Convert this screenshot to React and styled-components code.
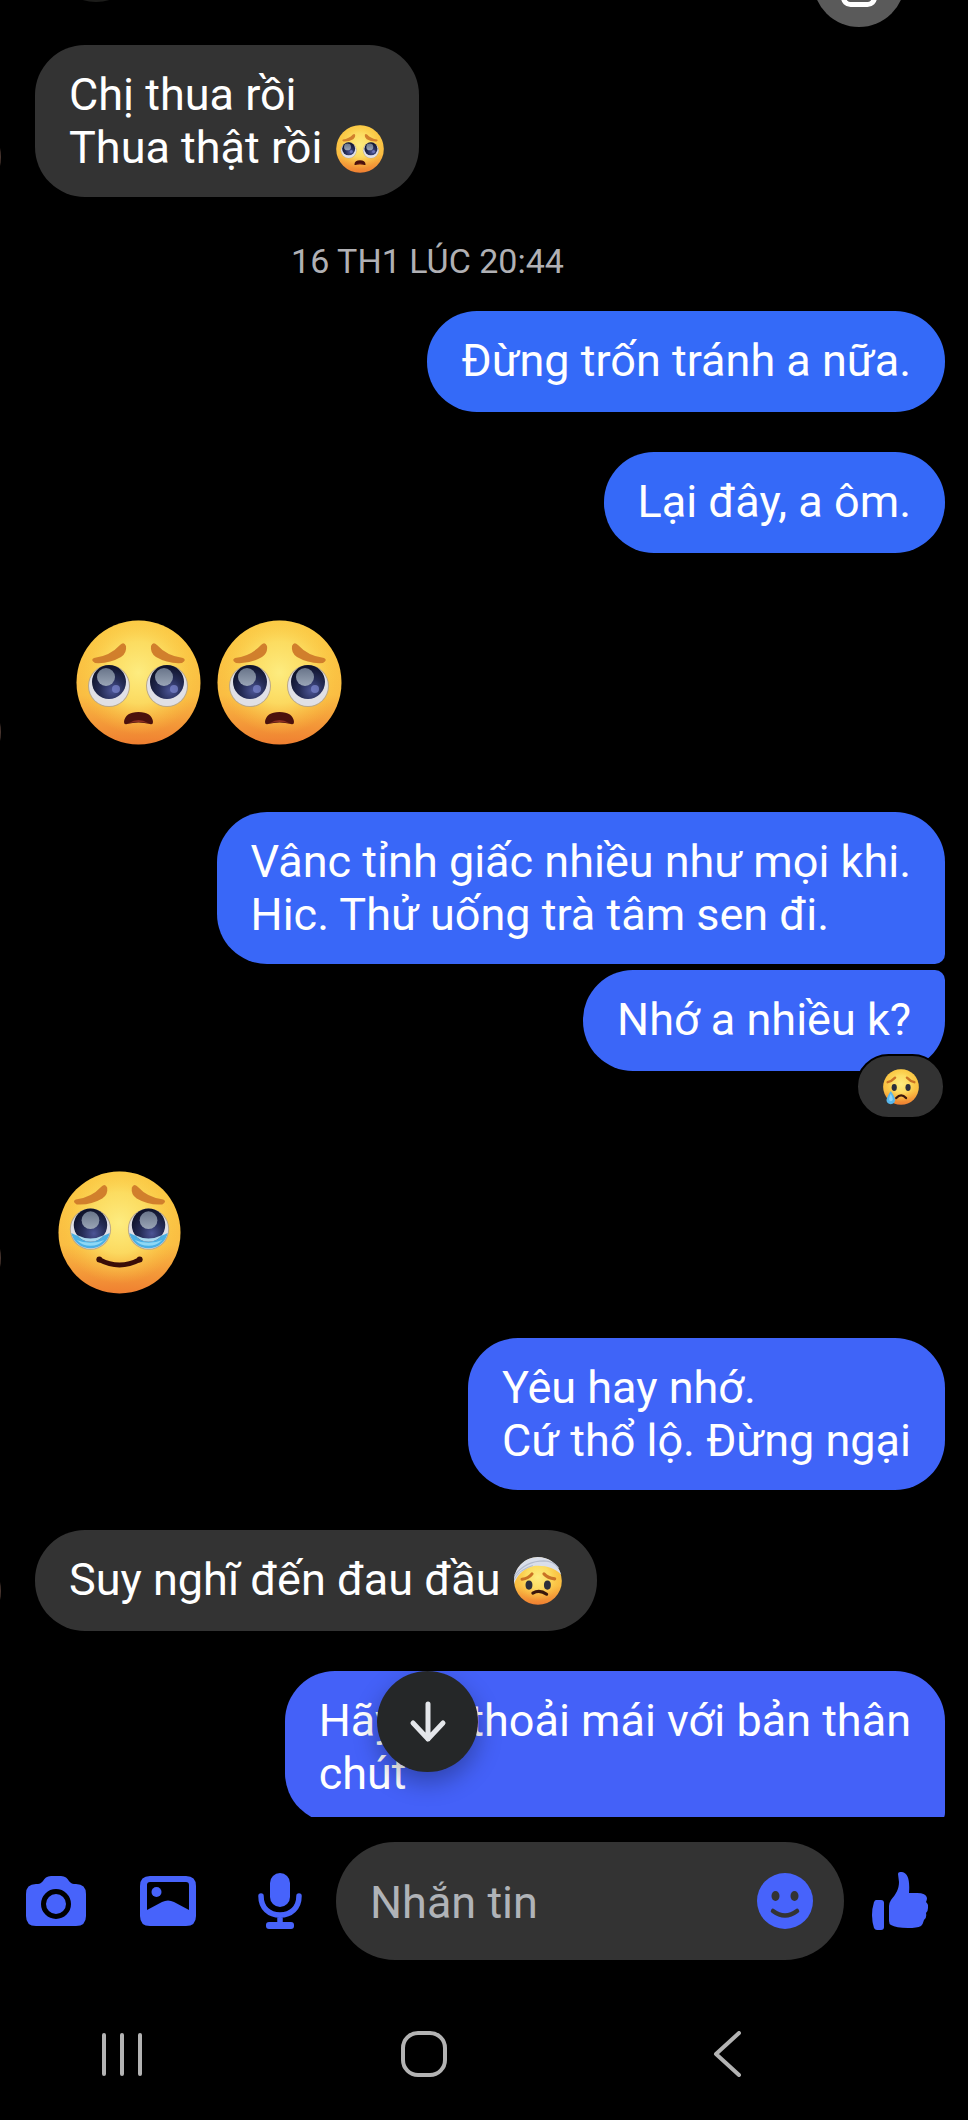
import React, { useId } from 'react'
import styled, { createGlobalStyle } from 'styled-components'

const accent = '#4763fb'

// the message list, oldest first
const messages = [
  { id: 1, from: 'them', lines: ['Chị thua rồi', 'Thua thật rồi'], emoji: 'pleading' },
  { id: 2, time: '16 TH1 LÚC 20:44' },
  { id: 3, from: 'me', tone: '#346af8', lines: ['Đừng trốn tránh a nữa.'] },
  { id: 4, from: 'me', tone: '#3569f8', lines: ['Lại đây, a ôm.'] },
  { id: 5, from: 'them', stickers: ['pleading', 'pleading'] },
  { id: 6, from: 'me', tone: '#3967f8', lines: ['Vânc tỉnh giấc nhiều như mọi khi.', 'Hic. Thử uống trà tâm sen đi.'], joinBottom: true },
  { id: 7, from: 'me', tone: '#3b66f8', lines: ['Nhớ a nhiều k?'], joinTop: true, reaction: 'crying' },
  { id: 8, from: 'them', stickers: ['touched'], large: true },
  { id: 9, from: 'me', tone: '#3f64f8', lines: ['Yêu hay nhớ.', 'Cứ thổ lộ. Đừng ngại'] },
  { id: 10, from: 'them', lines: ['Suy nghĩ đến đau đầu'], emoji: 'bandaged' },
  { id: 11, from: 'me', tone: '#4461f8', lines: ['Hãy để thoải mái với bản thân', 'chút'], joinBottom: true },
]

const Brows = ({ y = 0 }) => {
  const d = 'M18 38Q34 36 44 25Q48 21 50 26Q51 33 45 37Q33 44 19 43Q14 40 18 38Z'
  return (
    <g fill="#d17f2c" transform={`translate(0 ${y})`}>
      <path d={d} />
      <path d={d} transform="translate(125 0) scale(-1 1)" />
    </g>
  )
}

const BigEye = ({ x, y, eye, shine, tear }) => (
  <g transform={`translate(${x} ${y})`}>
    <circle r="21" fill="#b9a88a" />
    <circle r="20" fill="#e0e0e6" />
    {tear && <path d="M-19.500 4Q-10 9 0 9Q10 9 19.500 4A20 20 0 0 1 -19.500 4Z" fill="#4bb0e4" />}
    {tear && <path d="M-14 11Q0 17 14 11Q8 17 0 17Q-8 17 -14 11Z" fill="#8fd8f5" />}
    <circle cy={tear ? -4 : -4} r="17" fill={`url(#${eye})`} />
    {tear && <path d="M-14 6Q0 13 14 6Q8 13 0 13Q-8 13 -14 6Z" fill="#a9d9ee" />}
    <circle cx={tear ? 0 : -3} cy="-9" r="9" fill={`url(#${shine})`} />
    {!tear && <circle cx="7" cy="3" r="4" fill="#7d88d0" opacity="0.7" />}
  </g>
)

const Emoji = ({ kind, label }) => {
  const id = useId().replace(/[^a-zA-Z0-9]/g, '')
  const face = `face${id}`
  const glow = `glow${id}`
  const eye = `eye${id}`
  const shine = `shine${id}`

  return (
    <svg viewBox="0 0 125 125" role="img" aria-label={label || kind}>
      <defs>
        <linearGradient id={face} x1="0" y1="0" x2="0" y2="1">
          <stop offset="0" stopColor="#fbc843" />
          <stop offset="0.6" stopColor="#fabd43" />
          <stop offset="1" stopColor="#ef7f31" />
        </linearGradient>
        <radialGradient id={glow} cx="0.5" cy="0.42" r="0.5">
          <stop offset="0" stopColor="#fdec80" />
          <stop offset="0.5" stopColor="#fce268" stopOpacity="0.8" />
          <stop offset="1" stopColor="#fbc93f" stopOpacity="0" />
        </radialGradient>
        <radialGradient id={eye} cx="0.6" cy="0.75" r="0.7">
          <stop offset="0" stopColor="#4c5596" />
          <stop offset="0.5" stopColor="#252c56" />
          <stop offset="1" stopColor="#10142c" />
        </radialGradient>
        <linearGradient id={shine} x1="0" y1="0" x2="0" y2="1">
          <stop offset="0" stopColor="#69758a" />
          <stop offset="1" stopColor="#9aa5b6" />
        </linearGradient>
      </defs>
      <circle cx="62.500" cy="62.500" r="62" fill={`url(#${face})`} />
      <circle cx="62.500" cy="62.500" r="62" fill={`url(#${glow})`} />

      {kind === 'pleading' && (
        <>
          <Brows />
          <BigEye x={33} y={66} eye={eye} shine={shine} />
          <BigEye x={91} y={66} eye={eye} shine={shine} />
          <path d="M48 102Q49 92 62.500 92Q76 92 77 102Q77 105 74 104Q62.500 101 51 104Q48 105 48 102Z" fill="#4b110d" />
          <path d="M53 103Q62.500 97 72 103Q62.500 101 53 103Z" fill="#8c2f22" />
        </>
      )}

      {kind === 'touched' && (
        <>
          <Brows y={-9} />
          <BigEye x={33} y={59} eye={eye} shine={shine} tear />
          <BigEye x={92} y={59} eye={eye} shine={shine} tear />
          <path d="M42 90Q62.500 101 83 90" fill="none" stroke="#3a0d08" strokeWidth="5" strokeLinecap="round" />
          <circle cx="42" cy="90" r="3" fill="#3a0d08" />
          <circle cx="83" cy="90" r="3" fill="#3a0d08" />
        </>
      )}

      {kind === 'bandaged' && (
        <>
          <path d="M0 72C4 52 24 30 49 24C77 20 106 28 123 46C114 16 90 0 62 0C27 0 0 30 0 62Z" fill="#d9deea" />
          <path d="M2 47C22 22 49 10 78 10Q103 11 116 28M0 60Q12 33 49 22" fill="none" stroke="#b4bccd" strokeWidth="3" />
          <g fill="none" stroke="#c97225" strokeWidth="8" strokeLinecap="round">
            <path d="M21 58Q38 56 47 44" />
            <path d="M78 44Q88 55 106 57" />
          </g>
          <ellipse cx="39" cy="73" rx="9" ry="12" fill="#2b2f3c" />
          <ellipse cx="87" cy="73" rx="9" ry="12" fill="#2b2f3c" />
          <path d="M49 94Q67 84 85 97" fill="none" stroke="#3a170c" strokeWidth="8" strokeLinecap="round" />
        </>
      )}

      {kind === 'crying' && (
        <>
          <g fill="none" stroke="#c97225" strokeWidth="8" strokeLinecap="round">
            <path d="M16 46Q30 43 42 30" />
            <path d="M83 30Q95 43 109 46" />
          </g>
          <ellipse cx="39" cy="64" rx="9" ry="12" fill="#2b2f3c" />
          <ellipse cx="87" cy="64" rx="9" ry="12" fill="#2b2f3c" />
          <path d="M46 101Q63 82 80 101" fill="none" stroke="#3a170c" strokeWidth="8" strokeLinecap="round" />
          <path d="M27 76Q42 97 42 108Q41 122 27 122Q13 122 12 108Q13 97 27 76Z" fill="#58b7ec" />
          <path d="M27 86Q34 98 34 106Q33 112 27 112Q21 110 21 104Q22 96 27 86Z" fill="#8ed4f8" />
        </>
      )}
    </svg>
  )
}

const Message = ({ message }) => {
  const { from, lines, emoji, stickers, large, reaction, time } = message

  if (time) return <Time>{time}</Time>

  return (
    <Row $from={from} $joined={message.joinTop} $reacted={!!reaction}>
      {from === 'them' && <Avatar />}
      {stickers && (
        <Stickers $large={large}>
          {stickers.map((kind, index) => <Emoji key={index} kind={kind} />)}
        </Stickers>
      )}
      {lines && (
        <Bubble $tone={message.tone} $joinTop={message.joinTop} $joinBottom={message.joinBottom}>
          {lines.map((line, index) => (
            <Line key={line}>
              {line}
              {emoji && index === lines.length - 1 && <> <Emoji kind={emoji} /></>}
            </Line>
          ))}
          {reaction && <Reaction aria-label="Cảm xúc"><Emoji kind={reaction} /></Reaction>}
        </Bubble>
      )}
    </Row>
  )
}

const App = () => {
  return (
    <Screen>
      <GlobalStyle />
      <Header>
        <HeaderAvatar />
        <HeaderButton aria-label="Mở">
          <svg width="36" height="36" viewBox="0 0 36 36" fill="none" stroke="#fff" strokeWidth="5">
            <rect x="2.500" y="2.500" width="31" height="31" rx="7" />
          </svg>
        </HeaderButton>
      </Header>

      <Thread>
        <List>
          {messages.map((message) => <Message key={message.id} message={message} />)}
        </List>
        <ScrollDown aria-label="Xuống cuối">
          <svg width="40" height="42" viewBox="0 0 40 42" fill="none" stroke="#e4e6ea" strokeWidth="5" strokeLinecap="round" strokeLinejoin="round">
            <path d="M20 3V38M5 22L20 38L35 22" />
          </svg>
        </ScrollDown>
      </Thread>

      <Composer>
        <IconButton aria-label="Máy ảnh">
          <svg width="60" height="50" viewBox="0 0 60 50">
            <path fill={accent} d="M10 8H12C16 8 17 4 20 1.500Q22 0 25 0H35Q38 0 40 1.500C43 4 44 8 48 8H50Q60 8 60 18V40Q60 50 50 50H10Q0 50 0 40V18Q0 8 10 8Z" />
            <circle cx="30" cy="28" r="12.500" fill={accent} stroke="#000" strokeWidth="5" />
          </svg>
        </IconButton>
        <IconButton aria-label="Ảnh">
          <svg width="56" height="50" viewBox="0 0 56 50">
            <path fill={accent} fillRule="evenodd" d="M10 0H46Q56 0 56 10V40Q56 50 46 50H10Q0 50 0 40V10Q0 0 10 0ZM10 6Q7 6 7 9V34L22 26Q28 23 34 26L49 34V9Q49 6 46 6Z" />
            <circle cx="16.500" cy="16" r="5" fill={accent} />
          </svg>
        </IconButton>
        <IconButton aria-label="Ghi âm">
          <svg width="44" height="56" viewBox="0 0 44 56">
            <rect x="12" y="0" width="20" height="34" rx="10" fill={accent} />
            <path d="M3 23C3 35 11 42 22 42C33 42 41 35 41 23M22 42V52" fill="none" stroke={accent} strokeWidth="5.500" strokeLinecap="round" />
            <rect x="8" y="49" width="28" height="7" rx="3" fill={accent} />
          </svg>
        </IconButton>
        <Field>
          <Input type="text" placeholder="Nhắn tin" aria-label="Nhắn tin" />
          <EmojiButton aria-label="Biểu tượng cảm xúc">
            <svg width="56" height="56" viewBox="0 0 56 56">
              <circle cx="28" cy="28" r="28" fill={accent} />
              <ellipse cx="18.500" cy="23" rx="4" ry="5" fill="#333" />
              <ellipse cx="37.500" cy="23" rx="4" ry="5" fill="#333" />
              <path d="M16 38Q28 47 40 38" fill="none" stroke="#333" strokeWidth="4.500" strokeLinecap="round" />
            </svg>
          </EmojiButton>
        </Field>
        <IconButton aria-label="Thích">
          <svg width="56" height="58" viewBox="0 0 56 58" fill={accent}>
            <path d="M4 28H9Q12 28 12 31V55Q12 58 9 58H5Q3 58 2 56Q-2 43 2 30Q3 28 4 28Z" />
            <path d="M26 2C26 0 28 0 30 0C36 1 38 8 37 21H45Q54 21 55 26Q55 28 54 30Q57 33 56 36Q56 39 54 41Q55 46 52 48Q51 52 49 54Q45 56 36 56Q24 56 19 53Q17 52 17 49V34Q17 31 19 28C24 22 27 17 27 10Z" />
          </svg>
        </IconButton>
      </Composer>

      <Navigation>
        <NavButton aria-label="Gần đây">
          <svg width="42" height="46" viewBox="0 0 42 46" stroke="#b3b3b3" strokeWidth="4" strokeLinecap="round">
            <path d="M3 4V43M21 4V43M39 4V43" />
          </svg>
        </NavButton>
        <NavButton aria-label="Trang chủ">
          <svg width="46" height="46" viewBox="0 0 46 46" fill="none" stroke="#b3b3b3" strokeWidth="4">
            <rect x="2" y="2" width="42" height="42" rx="15" />
          </svg>
        </NavButton>
        <NavButton aria-label="Quay lại">
          <svg width="28" height="46" viewBox="0 0 28 46" fill="none" stroke="#b3b3b3" strokeWidth="4" strokeLinecap="round" strokeLinejoin="round">
            <path d="M26 2L3 23L26 44" />
          </svg>
        </NavButton>
      </Navigation>
    </Screen>
  )
}

const GlobalStyle = createGlobalStyle`
  * {
    box-sizing: border-box;
  }
  body {
    margin: 0;
    background-color: black;
    font-family: Roboto, "Liberation Sans", sans-serif;
  }
  button {
    border: none;
    padding: 0;
    background-color: transparent;
    display: flex;
    align-items: center;
    justify-content: center;
    cursor: pointer;
  }
  svg {
    display: block;
  }
`

const Screen = styled.div`
  height: 100vh;
  display: flex;
  flex-direction: column;
  overflow: hidden;
  background-color: black;
  color: white;
`

const Header = styled.header`
  display: flex;
  justify-content: space-between;
  align-items: flex-end;
  height: 27px;
  flex-shrink: 0;
  padding: 0 63px 0 50px;
  overflow: hidden;
`

const HeaderAvatar = styled.div`
  width: 92px;
  height: 92px;
  margin-bottom: 25px;
  border-radius: 50%;
  background-color: #1c1c1a;
`

const HeaderButton = styled.button`
  width: 92px;
  height: 92px;
  flex-shrink: 0;
  border-radius: 50%;
  background-color: #5a5a5a;

  svg {
    margin-top: 16px;
  }
`

const Thread = styled.main`
  flex: 1;
  min-height: 0;
  position: relative;
  overflow: hidden;
`

const List = styled.div`
  padding: 18px 23px 0 0;
`

const Row = styled.div`
  display: flex;
  align-items: flex-end;
  justify-content: ${({ $from }) => ($from === 'me' ? 'flex-end' : 'flex-start')};
  margin-top: ${({ $joined }) => ($joined ? '6px' : '40px')};
  padding-bottom: ${({ $reacted }) => ($reacted ? '46px' : '0')};

  &:first-child {
    margin-top: 0;
  }
`

/* sits almost fully past the left edge */
const Avatar = styled.div`
  width: 80px;
  height: 80px;
  flex-shrink: 0;
  margin: 0 34px 0 -79px;
  border-radius: 50%;
  background-color: #4a3630;
`

const Bubble = styled.div`
  position: relative;
  min-height: 101px;
  padding: 23px 34px;
  border-radius: 50px;
  border-top-right-radius: ${({ $joinTop }) => ($joinTop ? '10px' : '50px')};
  border-bottom-right-radius: ${({ $joinBottom }) => ($joinBottom ? '10px' : '50px')};
  background-color: ${({ $tone }) => $tone || '#333333'};
`

const Line = styled.div`
  font-size: 45px;
  line-height: 53px;

  svg {
    display: inline-block;
    width: 48px;
    height: 48px;
    margin: -8px 1px -8px 2px;
    vertical-align: -2px;
  }
`

const Reaction = styled.button`
  position: absolute;
  right: 0;
  bottom: -48px;
  width: 89px;
  height: 65px;
  border: 2px solid black;
  border-radius: 33px;
  background-color: #333333;

  svg {
    width: 36px;
    height: 36px;
  }
`

const Stickers = styled.div`
  display: flex;
  gap: 16px;
  padding: ${({ $large }) => ($large ? '14px 23px 4px' : '27px 41px')};

  svg {
    width: ${({ $large }) => ($large ? '123px' : '125px')};
    height: ${({ $large }) => ($large ? '123px' : '125px')};
  }
`

const Time = styled.div`
  height: 114px;
  padding: 12px 90px 0 0;
  margin-bottom: -40px;
  font-size: 34px;
  line-height: 104px;
  text-align: center;
  color: #b0b0b4;
`

const ScrollDown = styled.button`
  position: absolute;
  left: calc(50% - 107px);
  bottom: 45px;
  width: 101px;
  height: 101px;
  border-radius: 50%;
  background-color: #252728;
  box-shadow: 0 10px 24px rgba(0, 0, 0, 0.3);
`

const Composer = styled.div`
  display: flex;
  align-items: center;
  flex-shrink: 0;
  padding: 25px 12px 28px 0;
`

const IconButton = styled.button`
  width: 112px;
  height: 112px;
  flex-shrink: 0;
`

const Field = styled.div`
  flex: 1;
  min-width: 0;
  display: flex;
  align-items: center;
  height: 118px;
  padding: 0 31px 0 34px;
  border-radius: 59px;
  background-color: #333333;
`

const Input = styled.input`
  flex: 1;
  min-width: 0;
  border: none;
  outline: none;
  padding: 2px 0 0;
  background-color: transparent;
  color: white;
  font-family: inherit;
  font-size: 45px;
  line-height: 53px;

  &::placeholder {
    color: #b0b3b8;
    opacity: 1;
  }
`

const EmojiButton = styled.button`
  flex-shrink: 0;
`

const Navigation = styled.nav`
  display: flex;
  height: 132px;
  flex-shrink: 0;
  margin: 0 90px 0 -29px;
`

const NavButton = styled.button`
  flex: 1;
`

export default App
